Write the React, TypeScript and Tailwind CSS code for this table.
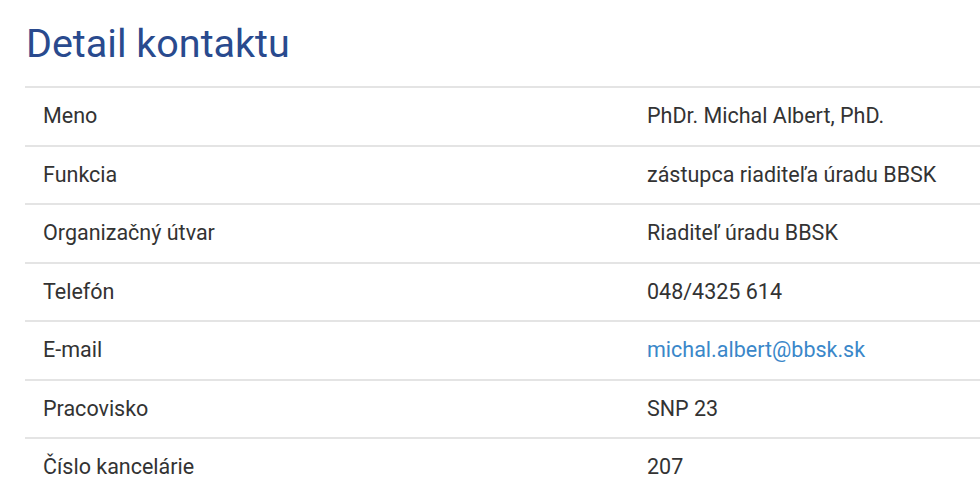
import React from "react";

const rows: { label: string; value: string; link?: boolean }[] = [
  { label: "Meno", value: "PhDr. Michal Albert, PhD." },
  { label: "Funkcia", value: "zástupca riaditeľa úradu BBSK" },
  { label: "Organizačný útvar", value: "Riaditeľ úradu BBSK" },
  { label: "Telefón", value: "048/4325 614" },
  { label: "E-mail", value: "michal.albert@bbsk.sk", link: true },
  { label: "Pracovisko", value: "SNP 23" },
  { label: "Číslo kancelárie", value: "207" },
];

export default function App() {
  return (
    <div
      className="w-[980px] h-[495px] overflow-hidden bg-white pl-[25px]"
      style={{ fontFamily: "Roboto, 'Liberation Sans', sans-serif" }}
    >
      <h1 className="pt-[20px] pl-[1px] h-[86px] text-[39.5px] leading-[48px] text-[#294a8e] font-normal">
        Detail kontaktu
      </h1>
      <div className="flex flex-col">
        {rows.map((r) => (
          <div
            key={r.label}
            className="flex items-center h-[58.5px] border-t-2 border-[#e4e4e4] text-[21.5px] text-[#333333]"
          >
            <div className="w-[622px] pl-[18px] shrink-0">{r.label}</div>
            <div className={r.link ? "text-[#3a87c9]" : ""}>{r.value}</div>
          </div>
        ))}
        <div className="border-t-2 border-[#e4e4e4]" />
      </div>
    </div>
  );
}
